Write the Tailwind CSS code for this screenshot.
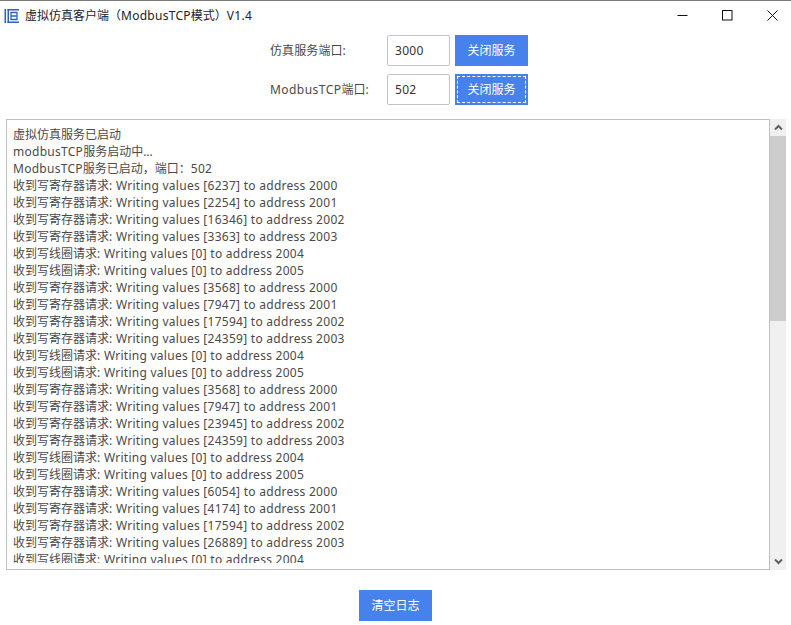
<!DOCTYPE html>
<html lang="zh-CN">
<head>
  <meta charset="UTF-8">
  <meta name="viewport" content="width=device-width, initial-scale=1.0">
  <title>虚拟仿真客户端（ModbusTCP模式）V1.4</title>
  <script src="https://cdn.jsdelivr.net/npm/@tailwindcss/browser@4"></script>
</head>
<body class="bg-white">
  <div class="flex flex-col w-[791px] h-[625px] overflow-hidden bg-white text-[#4a4a4a] text-[12px] font-['Noto_Sans','Noto_Sans_CJK_SC',sans-serif]">
    <!-- Title bar -->
    <header class="flex items-center h-[30px] border-t border-[#7a7a7a] shrink-0">
      <svg class="ml-[4px] w-[16px] h-[16px]" viewBox="0 0 16 16" fill="none">
        <path d="M0.500 1h1.500v14H0.500zM3.500 1h1.500v14H3.500z" fill="#2a62c0"/>
        <path d="M3.500 1h11.500v1.500H3.500zM3.500 13.500h11.500V15H3.500z" fill="#2a62c0"/>
        <path d="M7 4.500h6v7H7zM7 8h6" stroke="#2a62c0" stroke-width="1.300"/>
      </svg>
      <h1 class="ml-[5px] text-[12px] text-[#222]"><span>虚拟仿真客户端（</span><span class="tracking-[0.27px]">ModbusTCP</span><span>模式）</span><span class="tracking-[0.27px]">V1.4</span></h1>
      <div class="ml-auto mr-[13px] flex items-center gap-[34px]">
        <svg class="w-[11px] h-[11px]" viewBox="0 0 11 11"><path d="M0.500 5.500h10" stroke="#111" stroke-width="1"/></svg>
        <svg class="w-[11px] h-[11px]" viewBox="0 0 11 11" fill="none"><rect x="0.500" y="0.500" width="9.500" height="9.500" stroke="#111"/></svg>
        <svg class="w-[11px] h-[11px]" viewBox="0 0 11 11"><path d="M0.500 0.500l10 10M10.500 0.500l-10 10" stroke="#111"/></svg>
      </div>
    </header>

    <!-- Port settings -->
    <section class="flex flex-col items-end w-[528px] mt-[5px] gap-[8px] shrink-0">
      <div class="flex items-center h-[31px]">
        <label class="w-[117px] tracking-[0.1px]">仿真服务端口:</label>
        <div class="flex items-center w-[63px] h-[31px] pl-[7px] border border-[#c4c4c4] rounded-[2px] text-[#333] tracking-[0.27px]">3000</div>
        <button class="ml-[5px] w-[73px] h-[31px] bg-[#4781ec] text-white">关闭服务</button>
      </div>
      <div class="flex items-center h-[31px]">
        <label class="w-[117px]"><span class="tracking-[0.45px]">ModbusTCP</span>端口:</label>
        <div class="flex items-center w-[63px] h-[31px] pl-[7px] border border-[#c4c4c4] rounded-[2px] text-[#333] tracking-[0.27px]">502</div>
        <div class="ml-[5px] p-[2px] w-[73px] h-[31px] bg-[#4781ec]">
          <button class="w-full h-full border border-dashed border-white text-white">关闭服务</button>
        </div>
      </div>
    </section>

    <!-- Log area -->
    <section class="flex ml-[6px] mt-[14px] h-[451px] shrink-0">
      <div class="w-[764px] h-full py-[6px] pl-[6px] border border-[#bfbfbf]">
        <div id="log" class="h-full overflow-hidden leading-[17px] whitespace-nowrap"></div>
      </div>
      <div class="flex flex-col w-[16px] h-full bg-[#f0f0f0]">
        <div class="flex items-center justify-center h-[17px]">
          <svg class="w-[9px] h-[7px]" viewBox="0 0 9 7" fill="none"><path d="M1 5.500l3.500-3.500 3.500 3.500" stroke="#606060" stroke-width="2"/></svg>
        </div>
        <div class="h-[185px] bg-[#cdcdcd]"></div>
        <div class="flex-1"></div>
        <div class="flex items-center justify-center h-[17px]">
          <svg class="w-[9px] h-[7px]" viewBox="0 0 9 7" fill="none"><path d="M1 1.500l3.500 3.500 3.500-3.500" stroke="#606060" stroke-width="2"/></svg>
        </div>
      </div>
    </section>

    <!-- Footer -->
    <div class="flex justify-center w-[791px] mt-[20px]">
      <button class="w-[73px] h-[31px] bg-[#4781ec] text-white">清空日志</button>
    </div>
  </div>

  <script>
    const reg = (v, a) => `收到写寄存器请求<span class="tracking-[0.27px]">: Writing values [${v}] to address ${a}</span>`;
    const coil = (a) => `收到写线圈请求<span class="tracking-[0.27px]">: Writing values [0] to address ${a}</span>`;
    const lines = [
      '虚拟仿真服务已启动',
      '<span class="tracking-[0.27px]">modbusTCP</span>服务启动中...',
      '<span class="tracking-[0.27px]">ModbusTCP</span>服务已启动，端口：<span class="tracking-[0.27px]">502</span>',
      reg(6237, 2000), reg(2254, 2001), reg(16346, 2002), reg(3363, 2003), coil(2004), coil(2005),
      reg(3568, 2000), reg(7947, 2001), reg(17594, 2002), reg(24359, 2003), coil(2004), coil(2005),
      reg(3568, 2000), reg(7947, 2001), reg(23945, 2002), reg(24359, 2003), coil(2004), coil(2005),
      reg(6054, 2000), reg(4174, 2001), reg(17594, 2002), reg(26889, 2003), coil(2004),
    ];
    document.getElementById('log').innerHTML = lines.map(line => `<div>${line}</div>`).join('');
  </script>
</body>
</html>
